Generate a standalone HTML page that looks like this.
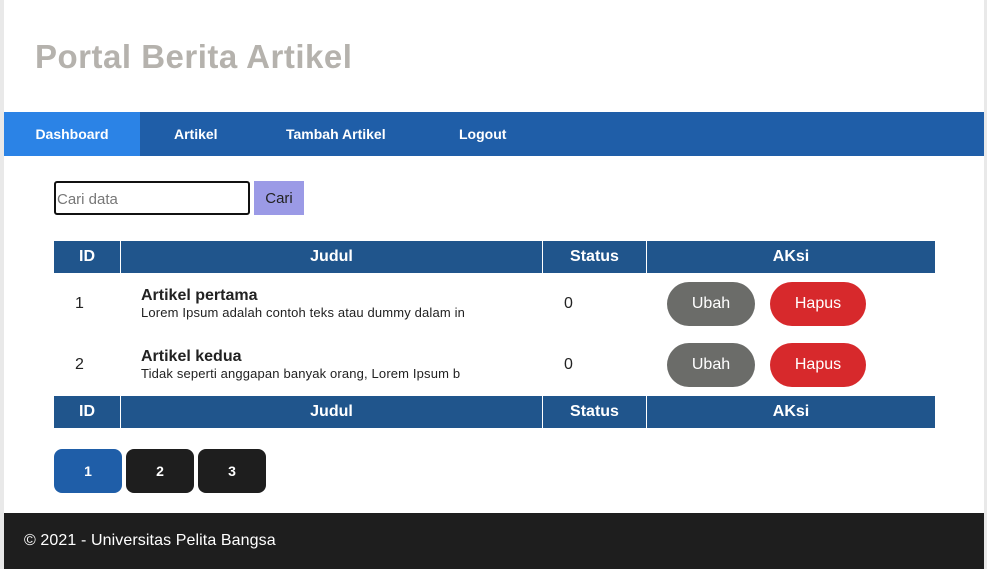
<!DOCTYPE html>
<html><head><meta charset="utf-8"><style>
*{box-sizing:border-box;margin:0;padding:0}
html,body{width:987px;height:569px;overflow:hidden;background:#e9e9e9}
body{font-family:"Liberation Sans",Arial,sans-serif;position:relative}
.page{position:absolute;left:4px;top:0;width:980px;height:569px;background:#fff}
h1{position:absolute;left:31px;top:38px;font-size:33px;font-weight:bold;color:#b5b2ad;letter-spacing:.5px}
nav{position:absolute;left:0;top:112px;width:980px;height:44px;background:#1f5ea8}
nav a{position:absolute;top:0;height:44px;line-height:44px;color:#fff;font-weight:bold;font-size:14px;text-decoration:none}
nav a.act{background:#2b83e6;left:0;width:136px;text-align:center}
.inp{position:absolute;left:50px;top:181px;width:196px;height:34px;border:2px solid #111;border-radius:3px;font-size:15px;color:#777;padding:8px 1px}
.btn{position:absolute;left:250px;top:181px;width:50px;height:34px;background:#9b9ae6;font-size:15px;color:#222;text-align:center;line-height:36px}
.th{position:absolute;height:32px;background:#20558c;color:#fff;font-weight:bold;font-size:16px;text-align:center;line-height:32px}
.t{position:absolute;font-size:16px;color:#222}
.pill{position:absolute;width:88px;height:44px;border-radius:22px;color:#fff;font-size:16px;text-align:center;line-height:44px}
.g{background:#6b6c69}.r{background:#d7292c;width:96px}
.pg{position:absolute;top:449px;width:68px;height:44px;border-radius:8px;background:#1e1e1e;color:#fff;font-weight:bold;font-size:14px;text-align:center;line-height:44px}
footer{position:absolute;left:0;top:513px;width:980px;height:56px;background:#1e1e1e;color:#fff;font-size:16px;line-height:56px;padding-left:20px;letter-spacing:.1px}
</style></head><body><div class="page">
<h1>Portal Berita Artikel</h1>
<nav><a class="act">Dashboard</a><a style="left:170px">Artikel</a><a style="left:282px">Tambah Artikel</a><a style="left:455px">Logout</a></nav>
<div class="inp">Cari data</div><div class="btn">Cari</div>
<div class="th" style="left:50px;top:241px;width:66px">ID</div>
<div class="th" style="left:117px;top:241px;width:421px">Judul</div>
<div class="th" style="left:539px;top:241px;width:103px">Status</div>
<div class="th" style="left:643px;top:241px;width:288px">AKsi</div>
<div class="t" style="left:71px;top:295px">1</div>
<div class="t" style="left:137px;top:287px;font-weight:bold">Artikel pertama</div>
<div class="t" style="left:137px;top:305px;font-size:13px;letter-spacing:.15px">Lorem Ipsum adalah contoh teks atau dummy dalam in</div>
<div class="t" style="left:560px;top:295px">0</div>
<div class="pill g" style="left:663px;top:282px">Ubah</div>
<div class="pill r" style="left:766px;top:282px">Hapus</div>
<div class="t" style="left:71px;top:356px">2</div>
<div class="t" style="left:137px;top:348px;font-weight:bold">Artikel kedua</div>
<div class="t" style="left:137px;top:366px;font-size:13px;letter-spacing:.15px">Tidak seperti anggapan banyak orang, Lorem Ipsum b</div>
<div class="t" style="left:560px;top:356px">0</div>
<div class="pill g" style="left:663px;top:343px">Ubah</div>
<div class="pill r" style="left:766px;top:343px">Hapus</div>
<div class="th" style="left:50px;top:396px;width:66px">ID</div>
<div class="th" style="left:117px;top:396px;width:421px">Judul</div>
<div class="th" style="left:539px;top:396px;width:103px">Status</div>
<div class="th" style="left:643px;top:396px;width:288px">AKsi</div>
<div class="pg" style="left:50px;background:#1f5ea8">1</div>
<div class="pg" style="left:122px">2</div>
<div class="pg" style="left:194px">3</div>
<footer>© 2021 - Universitas Pelita Bangsa</footer>
</div></body></html>
